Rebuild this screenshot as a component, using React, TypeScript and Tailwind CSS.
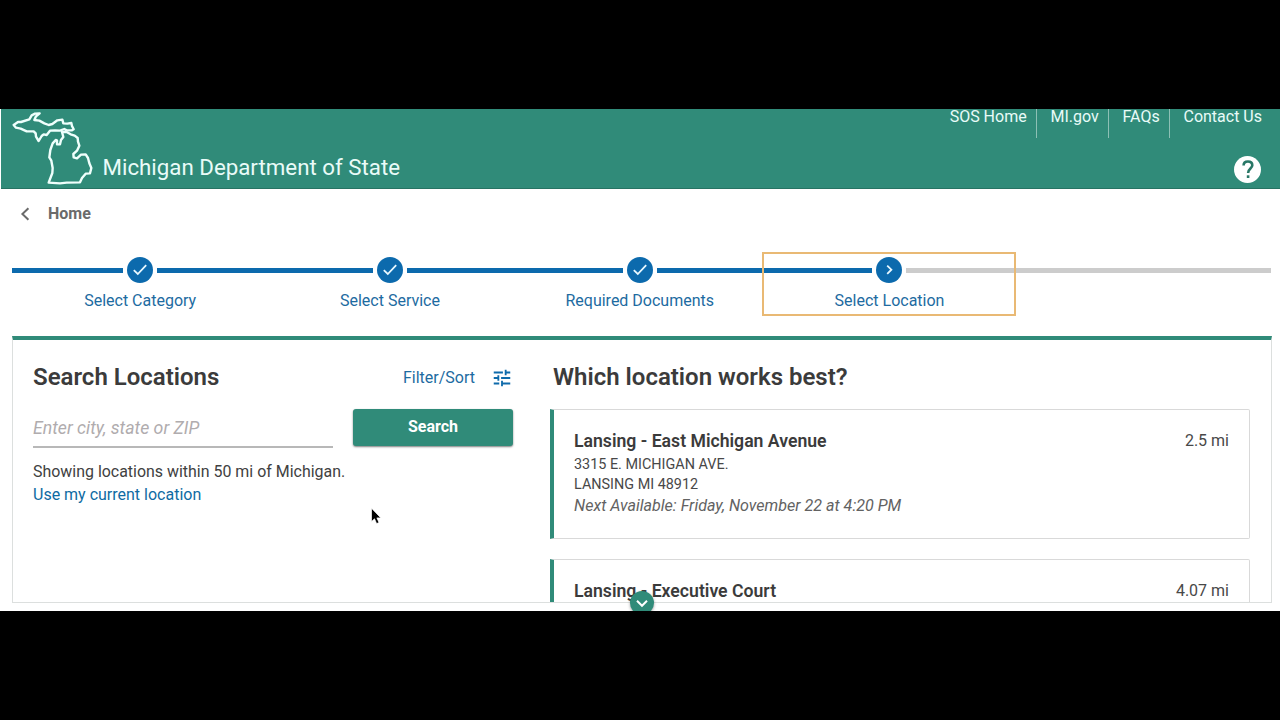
import React from 'react';
import clsx from 'clsx';

const navLinks = ['SOS Home', 'MI.gov', 'FAQs', 'Contact Us'];

const steps = [
  { label: 'Select Category', done: true },
  { label: 'Select Service', done: true },
  { label: 'Required Documents', done: true },
  { label: 'Select Location', done: false },
];

const locations = [
  {
    name: 'Lansing - East Michigan Avenue',
    distance: '2.5 mi',
    address: ['3315 E. MICHIGAN AVE.', 'LANSING MI 48912'],
    next: 'Next Available: Friday, November 22 at 4:20 PM',
  },
  {
    name: 'Lansing - Executive Court',
    distance: '4.07 mi',
    address: [],
    next: '',
  },
];

const MichiganLogo = () => (
  <svg width="88" height="79" viewBox="24 15 264 237" fill="none" stroke="#effffc" strokeWidth="7.2" strokeLinejoin="round" strokeLinecap="round">
    <path d="M41 63L54 54L63 54L88 46L95 34L105 29L119 28L108 37L103 48L118 50L133 58L146 63L157 60L172 49L187 47L190 58L202 59L214 57L216 66L221 76L216 79L200 79L193 75L180 80L165 79L150 80L140 93L131 91L125 96L116 111L108 98L107 88L101 82L80 82L62 74L48 71Z" />
    <path d="M186 84L200 84L212 91L224 95L233 102L234 113L238 125L231 140L220 150L221 160L231 163L243 152L257 151L264 162L268 178L274 192L270 208L257 209L246 222L240 235L200 236L180 238L146 236L157 207L158 192L154 170L148 160L151 138L158 118L167 108L171 109L171 121L180 121L183 108L190 99L186 84" />
  </svg>
);

const SlidersIcon = () => (
  <svg className="mt-px" width="22" height="22" viewBox="0 0 24 24" fill="#0f6bab">
    <path d="M3 17v2h6v-2H3zM3 5v2h10V5H3zm10 16v-2h8v-2h-8v-2h-2v6h2zM7 9v2H3v2h4v2h2V9H7zm14 4v-2H11v2h10zm-6-4h2V7h4V5h-4V3h-2v6z" />
  </svg>
);

const App = () => {
  return (
    <div className="h-[720px] w-[1280px] overflow-hidden bg-black pt-[109px] font-['Roboto',sans-serif] text-base text-[#414141]">
      <div className="relative flex h-[502px] flex-col overflow-hidden bg-white">
        {/* Header */}
        <header className="ml-px flex h-20 shrink-0 justify-between border-b border-[#277363] bg-[#308b79] text-[#e9fbf8]">
          <div className="flex pl-[7px]">
            <MichiganLogo />
            <h1 className="ml-[6.5px] mt-[42px] text-[22.3px] leading-8 whitespace-nowrap">Michigan Department of State</h1>
          </div>
          <div className="flex flex-col items-end">
            <nav className="flex h-[29px] leading-[15px]">
              {navLinks.map((label) => (
                <a key={label} className="border-r border-[#8dc0b5] pl-[13.5px] pr-[9.3px] whitespace-nowrap last:border-r-0 last:pr-[18px]">
                  {label}
                </a>
              ))}
            </nav>
            <button className="mr-[19px] mt-[18px] flex size-[27px] items-center justify-center rounded-full bg-white">
              <svg width="12" height="19" viewBox="0 0 12 19" fill="none" stroke="#287766" strokeWidth="2.6">
                <path d="M1.6 5.6C1.6 2.8 3.3 1.5 5.9 1.5C8.7 1.5 10.3 3 10.3 5.3C10.3 8.5 6.1 8.6 6.1 13" />
                <path d="M6.1 15.3V18" />
              </svg>
            </button>
          </div>
        </header>

        {/* Back link */}
        <div className="flex h-12 shrink-0 items-center pl-[20px] font-bold text-[#6a6a6a]">
          <svg className="mt-px" width="10" height="14" viewBox="0 0 10 14" fill="none" stroke="#6a6a6a" strokeWidth="2">
            <path d="M8.4 1.2L2.4 7L8.4 12.8" />
          </svg>
          <span className="ml-[18px] mt-px">Home</span>
        </div>

        {/* Stepper */}
        <div className="ml-3 mr-[9px] mt-[17px] flex h-[60px] shrink-0">
          <div className="mt-[14px] h-[5px] w-[3px] bg-[#0c6aad]" />
          {steps.map((step) => (
            <div key={step.label} className={clsx('w-[249.8px] shrink-0 pt-[3px]', !step.done && 'relative outline-2 outline-[#e9b974]')}>
              <div className="flex items-center gap-1">
                <div className="h-[5px] flex-1 bg-[#0c6aad]" />
                <div className="flex size-[26px] items-center justify-center rounded-full bg-[#0c6aad]">
                  <svg width="16" height="16" viewBox="0 0 16 16" fill="none" stroke="#e8f8ff" strokeWidth="1.8">
                    {step.done ? <path d="M1.8 8.2L5.8 12L14.2 3.2" /> : <path d="M6.2 3.6L10.4 7.7L6.2 11.8" />}
                  </svg>
                </div>
                <div className={clsx('h-[5px] flex-1', step.done ? 'bg-[#0c6aad]' : 'bg-[#cccccc]')} />
              </div>
              <p className="ml-[0.5px] mt-[6px] text-center leading-6 text-[#1d6ba1]">{step.label}</p>
            </div>
          ))}
          <div className="mt-[14px] h-[5px] flex-1 bg-[#cccccc]" />
        </div>

        {/* Main panel */}
        <main className="ml-3 mr-[8px] mt-[22px] flex h-[267px] shrink-0 overflow-hidden border border-t-4 border-[#dcdfde] border-t-[#308b79]">
          <section className="ml-5 w-[480px] shrink-0">
            <div className="mt-[21px] flex h-8 items-center">
              <h2 className="text-2xl font-semibold text-[#3b3b3b]">Search Locations</h2>
              <a className="ml-auto mr-4 mt-px text-[#1d6ba1]">Filter/Sort</a>
              <SlidersIcon />
            </div>
            <div className="mt-4 flex justify-between">
              <input
                className="h-[39px] w-[300px] border-b-2 border-[#b8b8b8] text-[17.7px] italic outline-none placeholder:text-[#b0acae]"
                placeholder="Enter city, state or ZIP"
              />
              <button className="h-[37px] w-[160px] rounded-[3px] bg-[#308b79] pb-px font-bold text-white shadow-[0_1px_2px_rgba(0,0,0,0.5)]">Search</button>
            </div>
            <p className="mt-[12px] text-[15.95px] leading-[23px]">Showing locations within 50 mi of Michigan.</p>
            <a className="block leading-[23px] text-[#0f6ba3]">Use my current location</a>
          </section>

          <section className="ml-[37px] w-[700px] shrink-0">
            <h2 className="ml-[3px] mt-[21px] text-2xl font-semibold leading-8 text-[#3b3b3b]">Which location works best?</h2>
            <div className="mt-4 flex flex-col gap-5">
              {locations.map((loc) => (
                <article key={loc.name} className="h-[130px] rounded-r-[2px] border border-l-4 border-[#d9d9d9] border-l-[#308b79] px-5 pt-[19px] text-[#484848]">
                  <div className="mb-[2px] flex h-6 justify-between leading-6">
                    <h3 className="text-[17.65px] font-semibold text-[#3b3b3b]">{loc.name}</h3>
                    <span>{loc.distance}</span>
                  </div>
                  {loc.address.map((line) => (
                    <p key={line} className="text-[14.4px] leading-5">{line}</p>
                  ))}
                  <p className="text-[16.1px] italic leading-[21px] text-[#626262]">{loc.next}</p>
                </article>
              ))}
            </div>
          </section>
        </main>

        {/* Scroll hint */}
        <button className="absolute left-[630px] top-[482px] flex size-6 items-center justify-center rounded-full bg-[#308b79] shadow-[0_1px_3px_rgba(0,0,0,0.35)]">
          <svg width="14" height="14" viewBox="0 0 14 14" fill="none" stroke="#ffffff" strokeWidth="2">
            <path d="M2 4.8L7 9.8L12 4.8" />
          </svg>
        </button>

        {/* Mouse pointer */}
        <svg className="absolute left-[370px] top-[398px]" width="12" height="19" viewBox="0 0 12 19">
          <path d="M1.5 1.2V14.6L4.5 11.8L6.6 16.6L9 15.6L6.9 10.9H10.8Z" fill="#000000" stroke="#ffffff" strokeWidth="0.7" />
        </svg>
      </div>
    </div>
  );
};

export default App;
